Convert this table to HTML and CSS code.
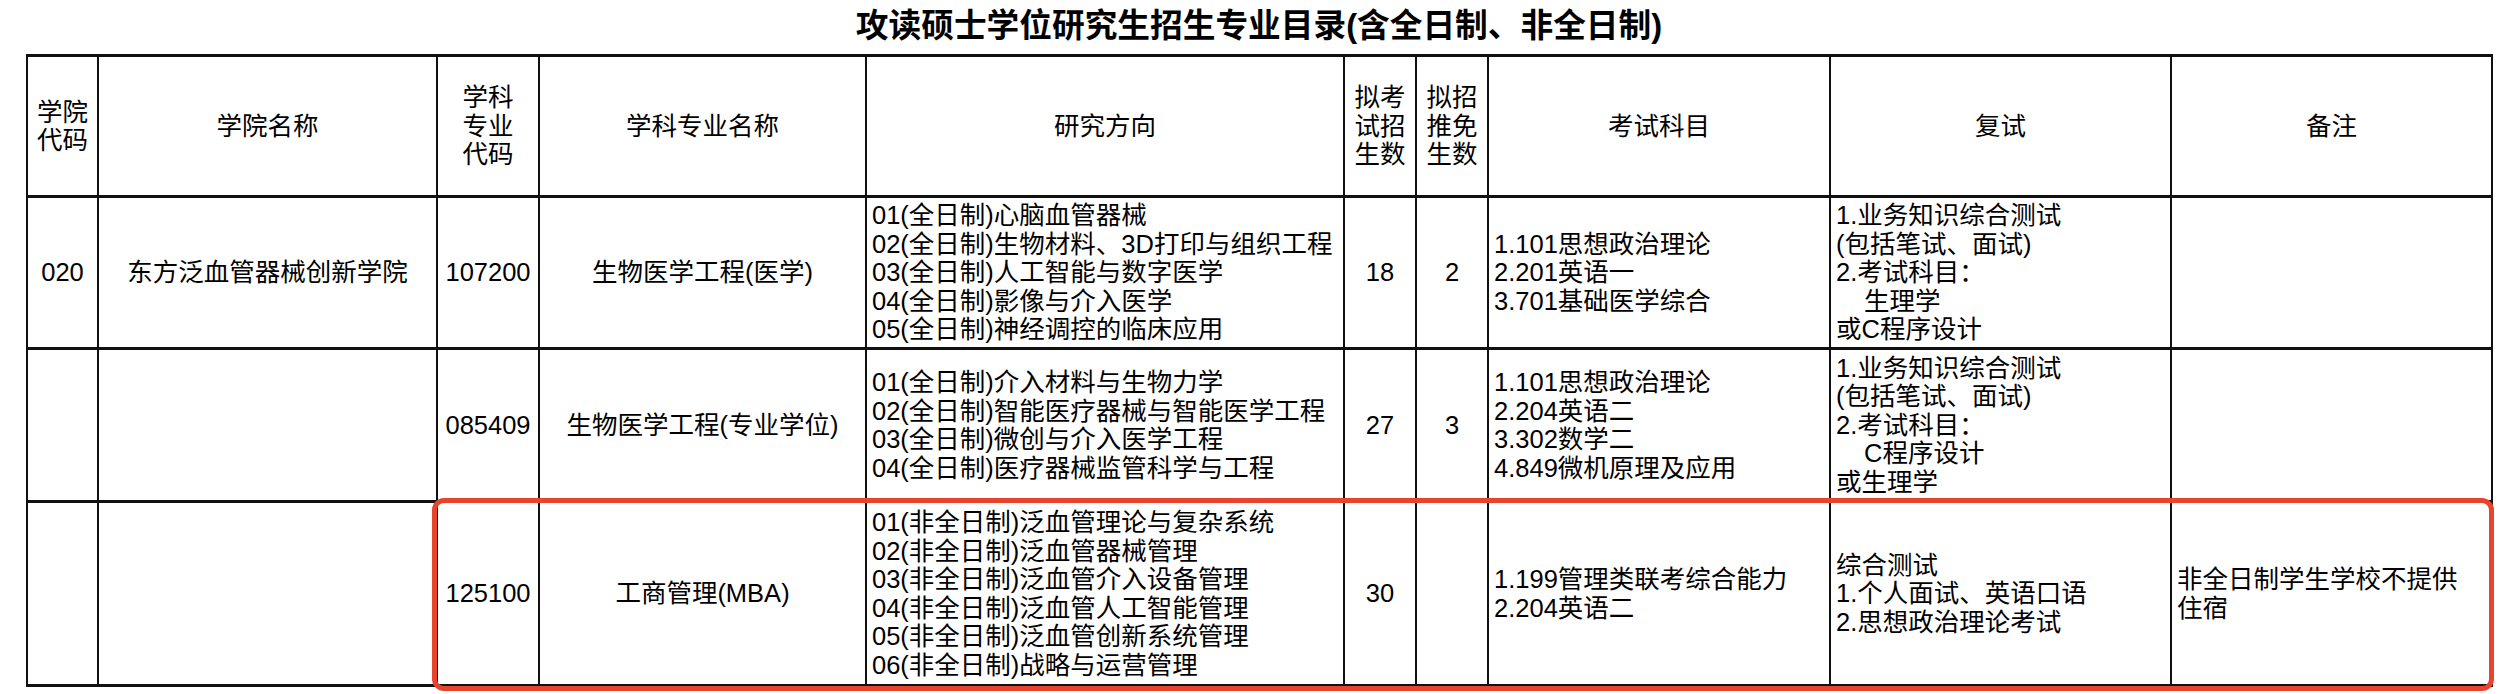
FILE: index.html
```html
<!DOCTYPE html>
<html lang="zh-CN">
<head>
<meta charset="utf-8">
<title>攻读硕士学位研究生招生专业目录</title>
<link rel="stylesheet" href="styles.css">
</head>
<body>
<div class="page">
  <h1 class="title">攻读硕士学位研究生招生专业目录(含全日制、非全日制)</h1>
  <div class="table-wrap">
    <table class="catalog">
      <colgroup>
        <col class="c1"><col class="c2"><col class="c3"><col class="c4"><col class="c5">
        <col class="c6"><col class="c7"><col class="c8"><col class="c9"><col class="c10">
      </colgroup>
      <thead>
        <tr class="head-row">
          <th>学院<br>代码</th>
          <th>学院名称</th>
          <th>学科<br>专业<br>代码</th>
          <th>学科专业名称</th>
          <th>研究方向</th>
          <th>拟考<br>试招<br>生数</th>
          <th>拟招<br>推免<br>生数</th>
          <th>考试科目</th>
          <th>复试</th>
          <th>备注</th>
        </tr>
      </thead>
      <tbody>
        <tr class="row-1">
          <td class="center">020</td>
          <td class="center">东方泛血管器械创新学院</td>
          <td class="center">107200</td>
          <td class="center">生物医学工程(医学)</td>
          <td class="left">01(全日制)心脑血管器械<br>02(全日制)生物材料、3D打印与组织工程<br>03(全日制)人工智能与数字医学<br>04(全日制)影像与介入医学<br>05(全日制)神经调控的临床应用</td>
          <td class="center">18</td>
          <td class="center">2</td>
          <td class="left">1.101思想政治理论<br>2.201英语一<br>3.701基础医学综合</td>
          <td class="left">1.业务知识综合测试<br>(包括笔试、面试)<br>2.考试科目：<br><span class="indent">生理学</span><br>或C程序设计</td>
          <td class="left"></td>
        </tr>
        <tr class="row-2">
          <td></td>
          <td></td>
          <td class="center">085409</td>
          <td class="center">生物医学工程(专业学位)</td>
          <td class="left">01(全日制)介入材料与生物力学<br>02(全日制)智能医疗器械与智能医学工程<br>03(全日制)微创与介入医学工程<br>04(全日制)医疗器械监管科学与工程</td>
          <td class="center">27</td>
          <td class="center">3</td>
          <td class="left">1.101思想政治理论<br>2.204英语二<br>3.302数学二<br>4.849微机原理及应用</td>
          <td class="left">1.业务知识综合测试<br>(包括笔试、面试)<br>2.考试科目：<br><span class="indent">C程序设计</span><br>或生理学</td>
          <td class="left"></td>
        </tr>
        <tr class="row-3">
          <td></td>
          <td></td>
          <td class="center">125100</td>
          <td class="center">工商管理(MBA)</td>
          <td class="left">01(非全日制)泛血管理论与复杂系统<br>02(非全日制)泛血管器械管理<br>03(非全日制)泛血管介入设备管理<br>04(非全日制)泛血管人工智能管理<br>05(非全日制)泛血管创新系统管理<br>06(非全日制)战略与运营管理</td>
          <td class="center">30</td>
          <td class="center"></td>
          <td class="left">1.199管理类联考综合能力<br>2.204英语二</td>
          <td class="left">综合测试<br>1.个人面试、英语口语<br>2.思想政治理论考试</td>
          <td class="left">非全日制学生学校不提供<br>住宿</td>
        </tr>
      </tbody>
    </table>
    <div class="highlight"></div>
  </div>
</div>
</body>
</html>
```

FILE: styles.css
```css
* { box-sizing: border-box; }

html, body {
  margin: 0;
  padding: 0;
  background: #ffffff;
}

body {
  font-family: "Liberation Sans", "Noto Sans CJK SC", sans-serif;
  color: #000000;
  width: 2510px;
  height: 694px;
  overflow: hidden;
}

.page {
  display: flex;
  flex-direction: column;
}

.title {
  margin: 0;
  height: 54px;
  display: flex;
  align-items: center;
  justify-content: center;
  padding-left: 8px;
  padding-bottom: 2px;
  font-size: 32.7px;
  font-weight: bold;
  line-height: 1;
}

.table-wrap {
  position: relative;
  margin-left: 26px;
  width: 2465px;
}

.catalog {
  width: 2465px;
  table-layout: fixed;
  border-collapse: collapse;
  font-size: 25.5px;
  line-height: 28.5px;
}

.c1 { width: 71px; }
.c2 { width: 339px; }
.c3 { width: 102px; }
.c4 { width: 327px; }
.c5 { width: 478px; }
.c6 { width: 72px; }
.c7 { width: 72px; }
.c8 { width: 342px; }
.c9 { width: 341px; }
.c10 { width: 321px; }

.catalog th,
.catalog td {
  border-left: 2px solid #111;
  border-right: 2px solid #111;
  border-top: 3px solid #111;
  border-bottom: 3px solid #111;
  vertical-align: middle;
  padding: 0 5px;
  font-weight: normal;
  white-space: nowrap;
  overflow: hidden;
}

.catalog th { text-align: center; }

.head-row { height: 141px; }
.row-1 { height: 152px; }
.row-2 { height: 153px; }
.row-3 { height: 184px; }

.center { text-align: center; }
.left { text-align: left; }

.indent {
  display: inline-block;
  padding-left: 28px;
}

.highlight {
  position: absolute;
  left: 406px;
  top: 444px;
  width: 2062px;
  height: 193px;
  border: 5px solid #e8442d;
  border-radius: 12px;
  pointer-events: none;
}
```
